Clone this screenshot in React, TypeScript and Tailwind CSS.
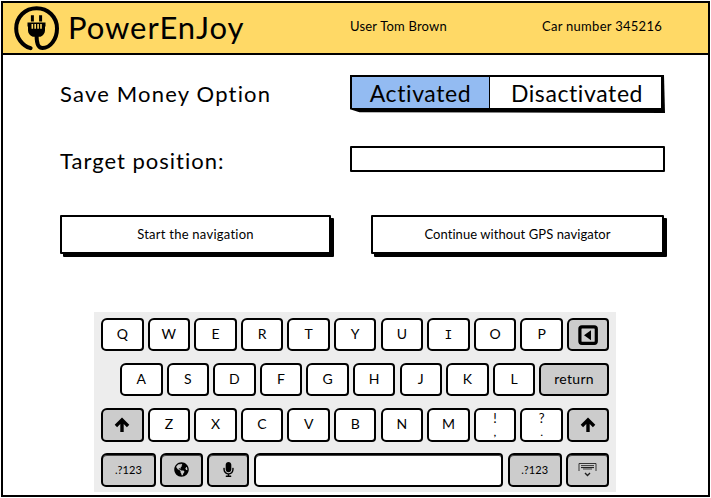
import type { ReactNode } from "react";
import { FaGlobeAmericas, FaMicrophone } from "react-icons/fa";

function PlugLogo() {
  return (
    <svg width="48" height="48" viewBox="0 0 48 48" fill="none" className="shrink-0">
      <path
        d="M17.6 44.2 C9 41.5 3.2 33.5 3.2 24.4 C3.2 13 12.2 4.2 23.6 4.2 C35 4.2 44 13 44 24.4 C44 35.5 37 44 29.6 44 C25 44 23.6 39.5 23.6 32"
        stroke="#000"
        strokeWidth="4"
        strokeLinecap="round"
      />
      <path d="M19.4 11.2v6.2M27.6 11.2v6.2" stroke="#000" strokeWidth="3" />
      <path d="M14.5 18.6H32.5V22.5H32V26.5C32 29.5 30 31.5 27.5 32.8H19.8C17 31.5 15 29.5 15 26.5V22.5H14.5Z" fill="#000" />
      <path d="M19.3 20v4.8M22.2 20v4.8M25.1 20v4.8M28 20v4.8" stroke="#ffd966" strokeWidth="1.6" />
    </svg>
  );
}

function ShiftArrow() {
  return (
    <svg width="16" height="16" viewBox="0 0 16 16" fill="none" stroke="#000" strokeWidth="3.4">
      <path d="M8 15V3M1.9 9L8 2.9L14.1 9" />
    </svg>
  );
}

function Button({ className, children }: { className: string; children: ReactNode }) {
  return (
    <button
      className={`flex h-[39px] items-center justify-center rounded-[1px] border-2 border-black bg-white text-[13px] shadow-[3px_3px_0_#000] ${className}`}
    >
      {children}
    </button>
  );
}

function Key({ wide, gray, shaded, children }: { wide?: string; gray?: boolean; shaded?: boolean; children?: ReactNode }) {
  return (
    <div
      className={`flex h-[33.4px] shrink-0 items-center justify-center rounded-[6px_4px_4px_5px] border-2 border-black text-[14px] leading-none ${
        gray ? "bg-[#cccccc]" : "bg-white"
      } ${shaded ? "shadow-[inset_0_1px_0_#444]" : ""} ${wide ?? "w-[42.5px]"}`}
    >
      {children}
    </div>
  );
}

function Letter({ value }: { value: string }) {
  return (
    <span className={value === "I" ? "font-['DejaVu_Sans_Mono',monospace] text-[13px]" : "-mt-[1px]"}>{value}</span>
  );
}

function Punctuation({ top, bottom }: { top: string; bottom: string }) {
  return (
    <span className="flex flex-col items-center">
      <span className="h-[16px] text-[13px] leading-[16px]">{top}</span>
      <span className="h-[13px] text-[10px] leading-[13px] font-bold">{bottom}</span>
    </span>
  );
}

export default function App() {
  return (
    <div className="h-[498px] w-[711px] overflow-hidden bg-white px-[1px] pt-[1px] pb-[1px] font-['Lato','Open_Sans',sans-serif] whitespace-nowrap text-black">
      <div className="flex h-[496px] flex-col border-2 border-black">
        <header className="flex h-[52px] shrink-0 items-center border-b-2 border-black bg-[#ffd966] pl-[10px]">
          <PlugLogo />
          <h1 className="w-[289px] shrink-0 pl-[7px] text-[31px] leading-[48px] tracking-[0.95px]">
            <span className="block -mt-[3px]">PowerEnJoy</span>
          </h1>
          <span className="w-[192px] shrink-0 pb-[2px] text-[13px] tracking-[0.2px]">User Tom Brown</span>
          <span className="pb-[2px] text-[13px] tracking-[0.28px]">Car number 345216</span>
        </header>

        <main className="flex flex-col">
          <section className="mt-[20px] flex h-[38px] pl-[57px]">
            <div className="w-[290px] pt-[4px] text-[22px] leading-[30px] tracking-[1.2px]">Save Money Option</div>
            <div className="flex h-[38px] w-[315px] bg-black pt-[2px] pr-[4px] pb-[5px] pl-[2px] text-[23px] leading-[32px] tracking-[0.6px] [clip-path:polygon(0_0,314px_0,315px_100%,3%_98%,0_90%)]">
              <div className="flex w-[138px] items-center justify-center border-r border-black bg-[#93bbf2] pt-[1px]">Activated</div>
              <div className="flex flex-1 items-center justify-center bg-white pt-[1px] pl-[3px]">Disactivated</div>
            </div>
          </section>

          <section className="mt-[33px] flex h-[26px] pl-[57px]">
            <div className="w-[290px] text-[22px] leading-[30px] tracking-[1px]">Target position:</div>
            <div className="h-[26px] w-[315px] rounded-[1px] border-2 border-black bg-white" />
          </section>

          <section className="mt-[43px] flex gap-[40px] pl-[57px]">
            <Button className="w-[271px] tracking-[0.25px]">Start the navigation</Button>
            <Button className="w-[293px] tracking-[0.07px]">Continue without GPS navigator</Button>
          </section>

          <section className="mt-[58px] ml-[91px] flex h-[180px] w-[522px] flex-col gap-[11.7px] bg-[#ededed] pt-[6px] pl-[7px]">
            <div className="flex gap-[4.1px]">
              {"QWERTYUIOP".split("").map((letter) => (
                <Key key={letter}>
                  <Letter value={letter} />
                </Key>
              ))}
              <Key gray>
                <svg width="20" height="20" viewBox="0 0 20 20">
                  <rect x="1.9" y="1.9" width="16.4" height="16.4" rx="2" fill="none" stroke="#000" strokeWidth="3.2" />
                  <path d="M6 10.2L13 5.2V15.2Z" fill="#000" />
                </svg>
              </Key>
            </div>
            <div className="flex gap-[4.1px] pl-[19px]">
              {"ASDFGHJKL".split("").map((letter) => (
                <Key key={letter}>
                  <Letter value={letter} />
                </Key>
              ))}
              <Key gray wide="w-[69.5px]">
                <span className="-mt-[2px] tracking-[0.3px]">return</span>
              </Key>
            </div>
            <div className="flex gap-[4.1px]">
              <Key gray>
                <ShiftArrow />
              </Key>
              {"ZXCVBNM".split("").map((letter) => (
                <Key key={letter}>
                  <Letter value={letter} />
                </Key>
              ))}
              <Key>
                <Punctuation top="!" bottom="," />
              </Key>
              <Key>
                <Punctuation top="?" bottom="." />
              </Key>
              <Key gray>
                <ShiftArrow />
              </Key>
            </div>
            <div className="flex gap-[4.2px]">
              <Key gray shaded wide="w-[55px]">
                <span className="text-[11px] tracking-[0.1px]">.?123</span>
              </Key>
              <Key gray shaded>
                <FaGlobeAmericas size={15} />
              </Key>
              <Key gray shaded>
                <FaMicrophone size={15} />
              </Key>
              <Key shaded wide="w-[249.8px]" />
              <Key gray shaded wide="w-[54.4px]">
                <span className="text-[11px] tracking-[0.1px]">.?123</span>
              </Key>
              <Key gray shaded>
                <svg width="19" height="15" viewBox="0 0 19 15" fill="none" stroke="#222">
                  <path d="M1 9V1.5H18V9" strokeWidth="0.9" />
                  <path d="M3 3.5H16M5 7H14" strokeWidth="0.8" />
                  <path d="M3 5.5H16" strokeWidth="1.2" />
                  <path d="M7 11L9.5 13.5L12 11" strokeWidth="1.4" />
                </svg>
              </Key>
            </div>
          </section>
        </main>
      </div>
    </div>
  );
}
